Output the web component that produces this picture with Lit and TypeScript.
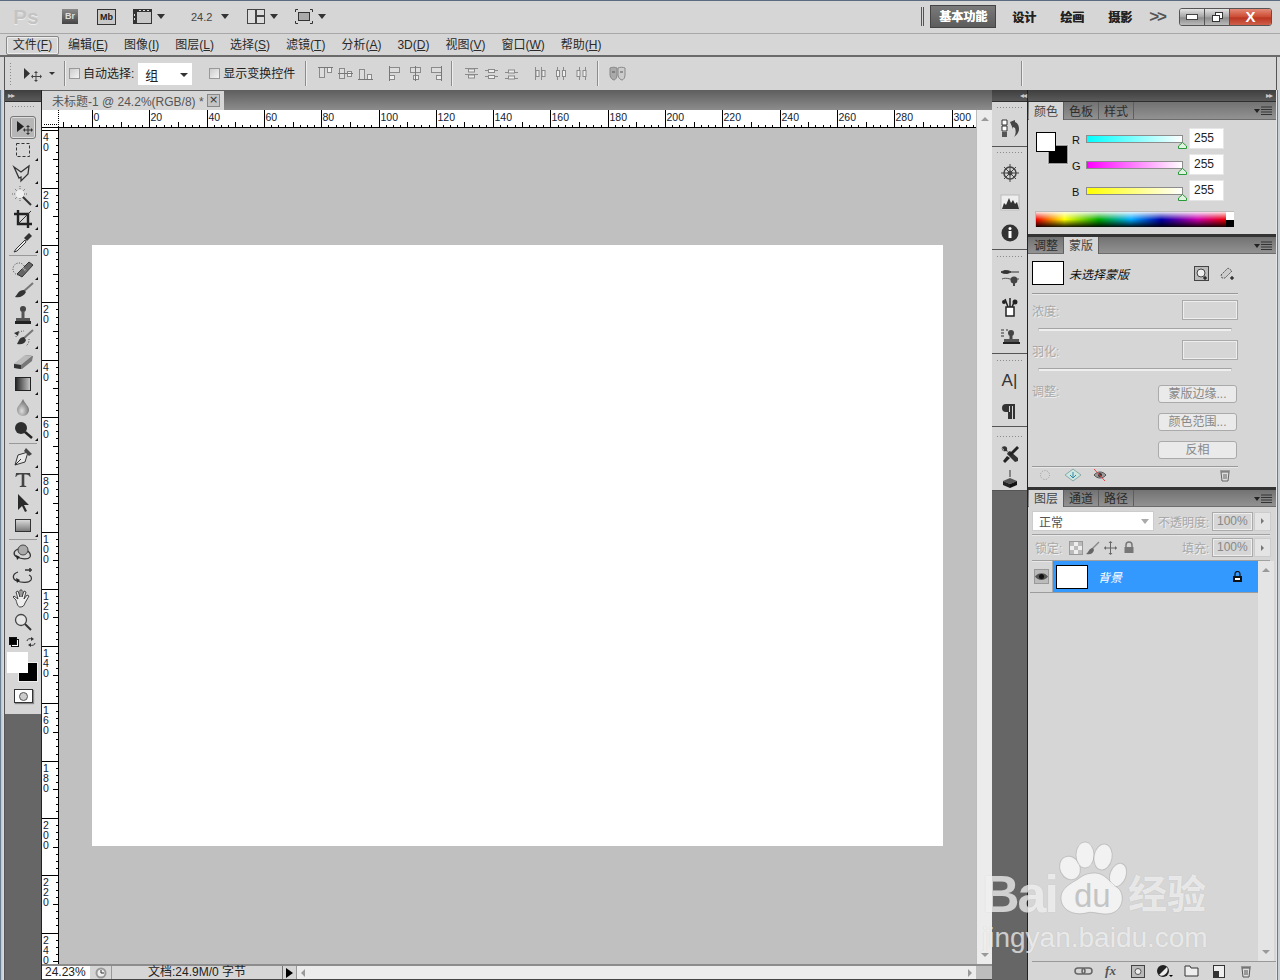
import { LitElement, css, html, svg, type TemplateResult } from "lit";
import { customElement } from "lit/decorators.js";

const UNIT = 57.3;
const ORIGIN_X = 50; // px from the left edge of the horizontal ruler (x = 42)
const ORIGIN_Y = 117; // px from the top of the vertical ruler (y = 128)

const ic = (content: unknown, w = 24, h = 23) =>
  html`<svg width=${w} height=${h} viewBox="0 0 ${w} ${h}">${content}</svg>`;

const tools: (
  | { sep: true }
  | { sep?: false; corner: boolean; active?: boolean; draw: unknown }
)[] = [
  {
    corner: false,
    active: true,
    draw: svg`<path d="M6 5v11l7-5.5z" fill="#222"/><path d="M17 10v8M13 14h8" stroke="#333" fill="none"/><path d="M17 9l-2 2h4zM17 19l-2-2h4zM12 14l2-2v4zM22 14l-2-2v4z" fill="#333"/>`,
  },
  {
    corner: true,
    draw: svg`<rect x="5.5" y="4.5" width="13" height="13" fill="none" stroke="#333" stroke-dasharray="3 2"/>`,
  },
  {
    corner: true,
    draw: svg`<path d="M3 5l7 5 8-6-1 8-7 7 0-4-2 1z" fill="none" stroke="#333" stroke-width="1.3"/>`,
  },
  {
    corner: true,
    draw: svg`<path d="M10 10l10 10" stroke="#333" stroke-width="2"/><circle cx="9" cy="9" r="4" fill="#eee"/><path d="M9 1v4M9 13v4M1 9h4M13 9h4M4 4l2 2M14 4l-2 2M4 14l2-2" stroke="#666" stroke-dasharray="1 1"/>`,
  },
  {
    corner: true,
    draw: svg`<path d="M7 2v14h14M3 6h14v14" fill="none" stroke="#222" stroke-width="2.4"/><path d="M7 16L20 3" stroke="#333"/>`,
  },
  {
    corner: true,
    draw: svg`<path d="M14 9l-9 9-2 3 3-1 9-9z" fill="#eee" stroke="#333"/><path d="M13 7l5-5 3 3-5 5z" fill="#333"/>`,
  },
  { sep: true },
  {
    corner: true,
    draw: svg`<circle cx="8" cy="11" r="6" fill="none" stroke="#444" stroke-dasharray="1 1.5"/><path d="M6 16L18 4l4 3-11 12z" fill="#666" stroke="#333"/><path d="M12 10l3 3" stroke="#bbb" stroke-width="2" stroke-dasharray="1 1"/>`,
  },
  {
    corner: true,
    draw: svg`<path d="M22 2L12 11" stroke="#777" stroke-width="2"/><path d="M13 9c-6 0-6 4-9 7 5 1 9-1 11-5z" fill="#333"/>`,
  },
  {
    corner: true,
    draw: svg`<circle cx="12" cy="5" r="3" fill="#444"/><rect x="10.5" y="7" width="3" height="7" fill="#555"/><rect x="5" y="14" width="14" height="3" fill="#555"/><rect x="4" y="17" width="16" height="3" fill="#222"/>`,
  },
  {
    corner: true,
    draw: svg`<path d="M22 3L12 12" stroke="#777" stroke-width="2"/><path d="M13 10c-5 0-5 4-7 7 4 1 8 0 9-4z" fill="#333"/><path d="M5 10a8 8 0 0 1 8-6M18 12a8 8 0 0 1-3 7" fill="none" stroke="#444" stroke-dasharray="1 1.5"/><path d="M3 6l5-2-1 5z" fill="#333"/>`,
  },
  {
    corner: true,
    draw: svg`<path d="M3 14L15 5l7 1-1 5-10 8-7-1z" fill="#777"/><path d="M3 14l7 1 11-9-7-1z" fill="#bbb"/><path d="M3 14l7 1v4l-7-1z" fill="#333"/>`,
  },
  {
    corner: true,
    draw: svg`<defs><linearGradient id="gr"><stop offset="0" stop-color="#222"/><stop offset="1" stop-color="#ccc"/></linearGradient></defs><rect x="4.5" y="4.5" width="15" height="13" fill="url(#gr)" stroke="#222"/>`,
  },
  {
    corner: true,
    draw: svg`<defs><radialGradient id="dp" cx=".4" cy=".7" r=".8"><stop offset="0" stop-color="#ddd"/><stop offset="1" stop-color="#555"/></radialGradient></defs><path d="M12 3c2 5 6 7 6 11a6 6 0 0 1-12 0c0-4 4-6 6-11z" fill="url(#dp)"/>`,
  },
  {
    corner: true,
    draw: svg`<circle cx="10" cy="9" r="6" fill="#2e2e2e"/><path d="M14 13l7 6" stroke="#222" stroke-width="2.5"/>`,
  },
  { sep: true },
  {
    corner: true,
    draw: svg`<path d="M17 6l-10 3-3 10 10-3 3-10z" fill="#e8e8e8" stroke="#333"/><path d="M15 2l6 6-3 2-5-5z" fill="#444"/><path d="M4 19l6-6" stroke="#333"/>`,
  },
  {
    corner: true,
    draw: svg`<path d="M5 4h14l.6 4H19c-.8-1.800-1.800-2.600-4-2.600h-1.700v11l2 .8v.8H8.700v-.8l2-.8v-11H9C6.800 5.400 5.800 6.200 5 8h-.6z" fill="#444"/>`,
  },
  {
    corner: true,
    draw: svg`<path d="M7 2v16l4-4 3 6 2-1-3-6h5z" fill="#2a2a2a"/>`,
  },
  {
    corner: true,
    draw: svg`<defs><linearGradient id="sh" x2="0" y2="1"><stop offset="0" stop-color="#ddd"/><stop offset="1" stop-color="#777"/></linearGradient></defs><rect x="4.5" y="4.5" width="15" height="12" fill="url(#sh)" stroke="#333"/>`,
  },
  { sep: true },
  {
    corner: false,
    draw: svg`<circle cx="12" cy="8" r="5" fill="#aaa" stroke="#444"/><path d="M7 7C2 9 2 13 6 15c4 2 11 3 13 0 1-2 0-4-2-6" fill="none" stroke="#333" stroke-width="1.3"/><path d="M9 15l-3 3-1-5z" fill="#222"/>`,
  },
  {
    corner: false,
    draw: svg`<path d="M7 7C1 9 1 14 6 16c5 2 12 2 14-1 1-2 0-4-2-5" fill="none" stroke="#333" stroke-width="1.3"/><path d="M9 15l-3 3-1-5z" fill="#222"/><path d="M14 5h7M19 3v4" stroke="#333" stroke-width="1.5"/>`,
  },
  {
    corner: false,
    draw: svg`<path d="M5 12L2 9l1-1 4 3-2-7 2-1 2 6V2h2v7l2-6 2 1-2 7 3-4 2 1-4 7c-1 3-2 4-5 4H9c-2 0-3-3-4-7z" fill="#eee" stroke="#333" stroke-width=".9"/>`,
  },
  {
    corner: false,
    draw: svg`<circle cx="10" cy="9" r="5.5" fill="#e6e6e6" stroke="#444" stroke-width="1.3"/><path d="M14 13l6 6" stroke="#333" stroke-width="2"/>`,
  },
];

const dockGroups: { h: number; pad: number; icons: unknown[] }[] = [
  {
    h: 45,
    pad: 4,
    icons: [
      svg`<path d="M2 2h5v5H2z M2 8h5v5H2z" fill="#fff" stroke="#333"/><path d="M2 14h5v5H2z" fill="#555"/><path d="M10 4l5-2v2c3 1 4 4 4 7s-2 6-5 8c2-3 2-6 1-9l-2-1v2z" fill="#444"/>`,
    ],
  },
  {
    h: 103,
    pad: 4,
    icons: [
      svg`<circle cx="10" cy="10" r="6" fill="none" stroke="#444" stroke-width="1.5"/><circle cx="10" cy="10" r="2.5" fill="#444"/><path d="M10 1v18M1 10h18M4 4l12 12M16 4L4 16" stroke="#444"/>`,
      svg`<rect x="1" y="2" width="18" height="15" fill="#eee" stroke="#bbb"/><path d="M2 16l2-6 2 2 3-7 2 5 2-3 2 4 2-2 2 7z" fill="#333"/>`,
      svg`<circle cx="10" cy="10" r="8.5" fill="#333"/><circle cx="10" cy="5.5" r="1.5" fill="#fff"/><rect x="8.5" y="8" width="3" height="7" fill="#fff"/>`,
    ],
  },
  {
    h: 104,
    pad: 5,
    icons: [
      svg`<path d="M1 5c4-2 7-2 10 0H19M1 5c3 2 6 2 10 0" stroke="#333" fill="#333"/><path d="M19 12h-9c-3-1-6-1-8 0" stroke="#555" fill="none"/><circle cx="14" cy="13" r="3.5" fill="#444"/><path d="M14 15v4" stroke="#444" stroke-width="2"/>`,
      svg`<rect x="6" y="10" width="8" height="9" fill="#fff" stroke="#222" stroke-width="1.5"/><path d="M8 10L5 2M10 10V1M12 10l3-7" stroke="#222" stroke-width="1.5"/><circle cx="4" cy="5" r="2" fill="#222"/><circle cx="15" cy="5" r="2.5" fill="#222"/>`,
      svg`<path d="M1 3h3M1 6h3M1 9h3M6 3h2" stroke="#333"/><circle cx="11" cy="6" r="3" fill="#444"/><rect x="9.5" y="6" width="3" height="6" fill="#444"/><rect x="4" y="12" width="15" height="3" fill="#555"/><rect x="3" y="15" width="17" height="2" fill="#222"/>`,
    ],
  },
  {
    h: 73,
    pad: 5,
    icons: [
      "A|",
      svg`<path d="M9 3H6a4 4 0 0 0 0 8h3zM10 3h2v15h-2zM13 3h2v15h-2zM9 3h6v2H9zM8 11h2v7H8z" fill="#333"/>`,
    ],
  },
  {
    h: 64,
    pad: 8,
    icons: [
      svg`<path d="M2 3c-1 3 1 5 4 4l2 1-1 2 8 8 3-1 0-3-8-7-2 1-1-2c1-3-2-5-5-3l2 3-1 1z" fill="#333"/><path d="M17 2L9 10l2 2 8-8zM7 12l-4 5 2 2 5-5z" fill="#222"/>`,
      svg`<path d="M10 2v7" stroke="#333"/><path d="M3 13l7-3 7 3-7 3z" fill="#555"/><path d="M3 13l7 3v4l-7-3z" fill="#222"/><path d="M17 13l-7 3v4l7-3z" fill="#111"/>`,
    ],
  },
];

@customElement("app-root")
export class AppRoot extends LitElement {
  static styles = css`
    :host {
      display: block;
      position: relative;
      width: 1280px;
      height: 980px;
      overflow: hidden;
      background: #d6d6d6;
      font: 12px "Liberation Sans", "Noto Sans CJK SC", sans-serif;
      color: #222;
    }
    svg {
      display: block;
    }

    /* top application bar */
    .app-bar {
      display: flex;
      align-items: center;
      height: 34px;
      border-top: 1px solid #5b6b80;
      border-bottom: 1px solid #a8a8a8;
      box-sizing: border-box;
      padding-bottom: 1px;
      position: relative;
    }
    .ps {
      width: 62px;
      padding-left: 13px;
      box-sizing: border-box;
      font: bold 21px "Liberation Sans", sans-serif;
      color: #c4c4c4;
      text-shadow: 0 1px 0 #eee;
    }
    .br {
      width: 16px;
      height: 15px;
      background: linear-gradient(#8a8a8a, #444);
      color: #ddd;
      font: bold 9px/15px "Liberation Sans", sans-serif;
      text-align: center;
      margin-right: 19px;
    }
    .mb {
      width: 17px;
      height: 14px;
      border: 1px solid #333;
      background: #c8c8c8;
      font: bold 9px/14px "Liberation Sans", sans-serif;
      text-align: center;
      margin-right: 17px;
    }
    .tri {
      width: 0;
      height: 0;
      border-left: 4px solid transparent;
      border-right: 4px solid transparent;
      border-top: 5px solid #333;
    }
    .film {
      margin-right: 5px;
    }
    .zoom-val {
      margin-left: 26px;
      width: 30px;
      font-size: 11px;
      color: #444;
    }
    .zoom-val + .tri {
      margin-right: 18px;
    }
    .layout + .tri {
      margin: 0 17px 0 5px;
    }
    .screen + .tri {
      margin-left: 5px;
    }
    .spacer {
      flex: 1;
    }
    .grip2 {
      width: 1px;
      height: 19px;
      border-left: 1px solid #555;
      border-right: 1px solid #555;
      margin-right: 6px;
    }
    .ws {
      font-weight: bold;
      font-size: 12px;
      width: 48px;
      text-align: center;
      text-shadow: 0.3px 0 0 #222;
    }
    .ws.on {
      width: 66px;
      height: 23px;
      line-height: 23px;
      background: linear-gradient(#7a7a7a, #5c5c5c);
      border: 1px solid #444;
      box-sizing: border-box;
      color: #fff;
      text-shadow: 0.3px 0 0 #fff;
      margin-right: 4px;
    }
    .more {
      margin: 0 14px 0 5px;
      font: bold 17px/16px "Liberation Sans", sans-serif;
      color: #555;
      letter-spacing: -2px;
    }
    .win {
      display: flex;
      height: 18px;
      width: 93px;
      margin-right: 8px;
      border: 1px solid #555;
      border-radius: 3px;
      box-sizing: border-box;
      overflow: hidden;
    }
    .win div {
      display: flex;
      align-items: center;
      justify-content: center;
      width: 25px;
      background: linear-gradient(#e4e4e4, #a4a4a4 50%, #8c8c8c 55%, #bbb);
      border-right: 1px solid #555;
      box-sizing: border-box;
    }
    .win .close {
      flex: 1;
      border: none;
      background: linear-gradient(#e48a78, #cc4a33 50%, #b93520 55%, #d0604c);
      color: #fff;
      font: bold 15px/16px "Liberation Sans", sans-serif;
    }

    /* menu */
    .menu {
      display: flex;
      align-items: center;
      gap: 16px;
      height: 23px;
      padding: 1px 0 0 6px;
      box-sizing: border-box;
      font-size: 12px;
      border-bottom: 2px solid #6a6a6a;
      color: #2a2a2a;
    }
    .menu span {
      line-height: 19px;
    }
    .menu .on {
      width: 53px;
      height: 19px;
      box-sizing: border-box;
      border: 1px solid #888;
      border-radius: 2px;
      box-shadow: inset 0 0 0 1px #eee;
      text-align: center;
      line-height: 17px;
      margin-right: -7px;
    }

    /* options bar */
    .options {
      display: flex;
      align-items: center;
      height: 33px;
      margin: 0 3px 0 4px;
      box-sizing: border-box;
      border-left: 1px solid #555;
      border-right: 1px solid #555;
      padding-left: 4px;
      color: #222;
    }
    .options > span {
      padding-bottom: 3px;
    }
    .grip-v {
      width: 3px;
      height: 24px;
      background-image: radial-gradient(#8a8a8a 0.8px, transparent 1px);
      background-size: 3px 3px;
      margin-right: 11px;
    }
    .options .tri {
      border-left-width: 3px;
      border-right-width: 3px;
      border-top-width: 3px;
      margin: 0 9px 0 6px;
    }
    .opt-sep {
      width: 1px;
      height: 25px;
      background: #8c8c8c;
      box-shadow: 1px 0 0 #eee;
      margin-right: 4px;
    }
    .opt-sep.a {
      margin: 0 12px 0 10px;
    }
    .opt-sep.b {
      margin: 0 12px 0 3px;
    }
    .opt-sep.c {
      margin: 0 11px 0 4px;
    }
    .opt-sep.d {
      margin: 0 254px 0 0;
    }
    .check {
      width: 9px;
      height: 9px;
      border: 1px solid #999;
      background: linear-gradient(135deg, #ccc, #f4f4f4);
      margin-right: 3px;
    }
    .o-select {
      display: flex;
      align-items: center;
      justify-content: space-between;
      width: 54px;
      height: 22px;
      box-sizing: border-box;
      background: #fff;
      padding: 2px 4px 0 7px;
      margin: 0 17px 0 4px;
      font-size: 13px;
    }
    .options .o-select .tri {
      border-left-width: 4px;
      border-right-width: 4px;
      border-top-width: 4px;
      margin: 0;
    }
    .al {
      margin-right: 5px;
    }
    .gap-a {
      width: 10px;
    }
    .gap-b {
      width: 9px;
    }

    /* main area */
    .main {
      display: flex;
      height: 890px;
      background: #666;
    }
    .frame-l {
      width: 5px;
      flex: none;
      background: linear-gradient(90deg, #6d7f92 0, #6d7f92 1px, #b7c4cf 1px, #dde2e6 4px, #555 4px);
    }
    .frame-r {
      width: 4px;
      flex: none;
      background: linear-gradient(90deg, #e4e4e4 0, #e4e4e4 1px, #777 1px, #777 2px, #c9d0d6 2px);
    }
    .head {
      height: 12px;
      background: linear-gradient(#3e3e3e, #5a5a5a);
      border-bottom: 1px solid #2e2e2e;
      box-sizing: border-box;
      display: flex;
      align-items: center;
      color: #c8c8c8;
      font: 8px/11px "DejaVu Sans", sans-serif;
      letter-spacing: -1px;
    }

    /* tool box */
    .toolbox {
      width: 36px;
      flex: none;
      border-right: 1px solid #222;
    }
    .toolbox .head {
      padding-left: 3px;
    }
    .tools {
      background: #d6d6d6;
      height: 612px;
      padding-top: 3px;
      box-sizing: border-box;
    }
    .grip-h {
      height: 3px;
      margin: 0 4px;
      background-image: radial-gradient(#8a8a8a 0.8px, transparent 1px);
      background-size: 3px 3px;
    }
    .tools > .grip-h {
      margin: 0 6px 8px;
    }
    .tool {
      position: relative;
      height: 23px;
      display: flex;
      justify-content: center;
      align-items: center;
    }
    .tool.active {
      margin: 0 5px;
      background: #b6b6b6;
      border: 1px solid #777;
      border-radius: 3px;
      box-sizing: border-box;
      box-shadow: inset 0 0 0 1px #ddd;
    }
    .tool.corner::after {
      content: "";
      position: absolute;
      right: 3px;
      bottom: 1px;
      border-left: 3px solid transparent;
      border-bottom: 3px solid #111;
    }
    .tool-sep {
      height: 1px;
      margin: 1px 4px 2px;
      background: #999;
    }
    .mini {
      display: flex;
      justify-content: space-between;
      align-items: center;
      height: 16px;
      margin: 0 5px 0 4px;
    }
    .mini-sw {
      position: relative;
      width: 10px;
      height: 10px;
    }
    .mini-sw i {
      position: absolute;
      width: 6px;
      height: 6px;
      border: 1px solid #111;
    }
    .mini-sw i:first-child {
      right: 0;
      bottom: 0;
      background: #fff;
    }
    .mini-sw i:last-child {
      left: 0;
      top: 0;
      background: #000;
    }
    .big-sw {
      position: relative;
      height: 33px;
      margin-top: 1px;
    }
    .big-sw i {
      position: absolute;
      display: block;
      box-sizing: border-box;
    }
    .big-sw .bg {
      left: 13px;
      top: 11px;
      width: 20px;
      height: 20px;
      background: #000;
      border: 1px solid #eee;
    }
    .big-sw .fg {
      left: 2px;
      top: 1px;
      width: 21px;
      height: 21px;
      background: #fff;
    }
    .qmask {
      width: 17px;
      height: 12px;
      margin: 5px auto 0;
      border: 1px solid #333;
      background: #fff;
      box-shadow: 1px 1px 1px #888;
      display: flex;
      align-items: center;
      justify-content: center;
    }
    .qmask i {
      width: 7px;
      height: 7px;
      border-radius: 50%;
      border: 1px solid #555;
      background: #ccc;
    }

    /* document */
    .doc {
      width: 950px;
      flex: none;
      display: flex;
      flex-direction: column;
      background: #c0c0c0;
    }
    .doc-tabs {
      height: 20px;
      flex: none;
      background: linear-gradient(#5e5e5e, #8c8c8c);
      display: flex;
    }
    .doc-tab {
      display: flex;
      align-items: center;
      justify-content: space-between;
      width: 182px;
      height: 19px;
      margin-top: 1px;
      box-sizing: border-box;
      padding: 0 4px 0 10px;
      background: #d6d6d6;
      color: #555;
      font-size: 12px;
    }
    .doc-x {
      width: 11px;
      height: 11px;
      border: 1px solid #888;
      background: #c4c4c4;
      color: #333;
      font: 11px/10px "DejaVu Sans", sans-serif;
      text-align: center;
    }
    .doc-mid {
      flex: 1;
      display: flex;
      min-height: 0;
    }
    .doc-left {
      flex: 1;
      display: flex;
      flex-direction: column;
      min-width: 0;
    }
    .vscroll {
      width: 16px;
      flex: none;
      background: #ececec;
      border-left: 1px solid #bdbdbd;
      box-sizing: border-box;
      display: flex;
      flex-direction: column;
      justify-content: space-between;
      align-items: center;
      padding: 7px 0;
    }
    .up,
    .down {
      width: 0;
      height: 0;
      border-left: 4px solid transparent;
      border-right: 4px solid transparent;
    }
    .up {
      border-bottom: 4px solid #999;
    }
    .down {
      border-top: 4px solid #999;
    }
    .ruler-h {
      height: 18px;
      flex: none;
      background: #fff;
    }
    .work {
      flex: 1;
      display: flex;
      min-height: 0;
    }
    .ruler-v {
      width: 17px;
      flex: none;
      background: #fff;
      overflow: hidden;
    }
    .ruler-text {
      font: 10.5px "Liberation Sans", sans-serif;
      fill: #123;
    }
    .canvas {
      flex: 1;
      display: flex;
      align-items: center;
      justify-content: center;
      background: #c0c0c0;
    }
    .sheet {
      width: 851px;
      height: 601px;
      margin-bottom: 1px;
      background: #fff;
    }
    .status {
      height: 16px;
      flex: none;
      display: flex;
      border-top: 2px solid #8c8c8c;
      border-bottom: 1px solid #444;
      box-sizing: border-box;
      background: #d6d6d6;
      align-items: stretch;
    }
    .st-zoom {
      width: 48px;
      background: #fff;
      padding-left: 3px;
      box-sizing: border-box;
      font-size: 12px;
      line-height: 13px;
      flex: none;
    }
    .st-time {
      width: 22px;
      flex: none;
      display: flex;
      align-items: center;
      justify-content: center;
      border-right: 1px solid #999;
      box-sizing: border-box;
    }
    .st-info {
      width: 171px;
      flex: none;
      text-align: center;
      font-size: 12px;
      line-height: 13px;
      border-right: 1px solid #777;
      box-sizing: border-box;
    }
    .st-arrow {
      width: 13px;
      flex: none;
      display: flex;
      align-items: center;
      justify-content: center;
    }
    .st-arrow i {
      border-top: 5px solid transparent;
      border-bottom: 5px solid transparent;
      border-left: 7px solid #000;
    }
    .hscroll {
      flex: 1;
      background: #ececec;
      display: flex;
      justify-content: space-between;
      align-items: center;
      padding: 0 4px;
      border-left: 1px solid #999;
    }
    .left,
    .right {
      width: 0;
      height: 0;
      border-top: 4px solid transparent;
      border-bottom: 4px solid transparent;
    }
    .left {
      border-right: 4px solid #999;
    }
    .right {
      border-left: 4px solid #999;
    }
    .corner-box {
      width: 16px;
      flex: none;
      background: #bdbdbd;
    }

    /* dock strip */
    .dock {
      width: 36px;
      flex: none;
      border-right: 1px solid #222;
      box-sizing: border-box;
    }
    .dock .head {
      justify-content: flex-end;
      padding-right: 1px;
    }
    .dock-group {
      background: #d6d6d6;
      border-bottom: 1px solid #555;
      box-sizing: border-box;
      display: flex;
      flex-direction: column;
      align-items: center;
    }
    .dock-group .grip-h {
      align-self: stretch;
      margin: 0 4px 4px;
    }
    .dock-icon {
      height: 30px;
      display: flex;
      align-items: center;
      justify-content: center;
      color: #333;
      font: 17px "Liberation Sans", sans-serif;
    }

    /* panels */
    .panels {
      width: 248px;
      flex: none;
      display: flex;
      flex-direction: column;
      background: #d6d6d6;
    }
    .panels .head {
      justify-content: flex-end;
      padding-right: 4px;
    }
    .tabs {
      display: flex;
      height: 18px;
      flex: none;
      padding-left: 1px;
      background: linear-gradient(#727272, #929292);
      border-bottom: 1px solid #6c6c6c;
      box-sizing: border-box;
      position: relative;
    }
    .tab {
      width: 35px;
      text-align: center;
      font-size: 12px;
      line-height: 20px;
      color: #2c2c2c;
      border-right: 1px solid #5e5e5e;
      box-sizing: border-box;
    }
    .tab.on {
      background: #d6d6d6;
      height: 18px;
      color: #444;
    }
    .tabs .pmenu {
      position: absolute;
      right: 4px;
      top: 4px;
    }
    .divider {
      height: 3px;
      flex: none;
      background: #333;
    }
    .tabs.short {
      height: 17px;
    }
    .tabs.short .tab {
      line-height: 19px;
    }
    .tabs.short .tab.on {
      height: 17px;
    }

    .color-body {
      height: 114px;
      flex: none;
      padding: 8px 0 0 8px;
      box-sizing: border-box;
    }
    .color-top {
      display: flex;
      height: 75px;
    }
    .swatches {
      position: relative;
      width: 36px;
      flex: none;
    }
    .swatches i {
      position: absolute;
      display: block;
      box-sizing: border-box;
    }
    .swatches .b {
      left: 12px;
      top: 17px;
      width: 20px;
      height: 19px;
      background: #000;
      border: 1px solid #999;
      box-shadow: 0 0 0 1px #ddd;
    }
    .swatches .f {
      left: 0;
      top: 4px;
      width: 20px;
      height: 20px;
      background: #fff;
      border: 1px solid #000;
    }
    .chan {
      display: flex;
      align-items: center;
      height: 26px;
    }
    .chan label {
      width: 14px;
      font-size: 11px;
      flex: none;
      color: #111;
      margin-bottom: 2px;
    }
    .bar {
      position: relative;
      width: 95px;
      height: 6px;
      margin-bottom: 5px;
      border: 1px solid #8d8d8d;
      flex: none;
    }
    .bar.r {
      background: linear-gradient(90deg, #0ff, #fff);
    }
    .bar.g {
      background: linear-gradient(90deg, #f0f, #fff);
    }
    .bar.b {
      background: linear-gradient(90deg, #ff0, #fff);
    }
    .thumb {
      position: absolute;
      right: -5px;
      top: 6px;
      width: 9px;
      height: 7px;
    }
    .val {
      width: 35px;
      height: 21px;
      margin: 0 0 5px 6px;
      background: #fff;
      box-sizing: border-box;
      padding-left: 4px;
      font-size: 12px;
      line-height: 19px;
      border: 1px solid #e6e6e6;
      flex: none;
    }
    .spectrum {
      width: 199px;
      height: 16px;
      margin: 8px 0 0 -1px;
      display: flex;
      border: 1px solid #bbb;
      border-width: 1px 0 0 1px;
      box-sizing: border-box;
    }
    .spectrum .hue {
      flex: 1;
      background: linear-gradient(#ffffffe0, #ffffff00 50%, #00000000 50%, #000000e6),
        linear-gradient(90deg, #e00, #ff0 15%, #0a0 33%, #0af 50%, #00a 66%, #c0a 85%, #e00);
    }
    .spectrum .bw {
      width: 8px;
      background: linear-gradient(#fff 50%, #000 50%);
    }

    /* masks */
    .mask-body {
      height: 233px;
      flex: none;
      padding: 7px 0 0 4px;
      box-sizing: border-box;
      color: #aaa;
    }
    .m-top {
      display: flex;
      align-items: center;
      height: 24px;
      color: #111;
    }
    .m-thumb {
      width: 32px;
      height: 24px;
      background: #fff;
      border: 1px solid #000;
      box-sizing: border-box;
      margin-right: 5px;
    }
    .m-name {
      font-style: italic;
      font-size: 12px;
      width: 125px;
    }
    .m-pick {
      margin-right: 11px;
    }
    .hr {
      height: 1px;
      width: 206px;
      margin-top: 8px;
      background: #999;
      box-shadow: 0 1px 0 #e8e8e8;
    }
    .adjust + .hr {
      margin-top: 7px;
    }
    .field {
      display: flex;
      justify-content: space-between;
      align-items: center;
      width: 206px;
      height: 20px;
      margin-top: 9px;
      color: #a8a8a8;
      text-shadow: 1px 1px 0 #f0f0f0;
    }
    .hr + .field {
      margin-top: 6px;
    }
    .field i {
      width: 56px;
      height: 20px;
      box-sizing: border-box;
      border: 1px solid #aaa;
      box-shadow: inset 0 0 0 1px #eee;
    }
    .m-slider {
      width: 194px;
      height: 3px;
      margin: 8px 0 0 6px;
      border-top: 1px solid #a4a4a4;
      border-left: 1px solid #ccc;
      border-right: 1px solid #ccc;
      background: #efefef;
      box-sizing: border-box;
    }
    .adjust {
      display: flex;
      justify-content: space-between;
      width: 205px;
      margin-top: 14px;
      color: #a8a8a8;
    }
    .adjust > span {
      text-shadow: 1px 1px 0 #f0f0f0;
      line-height: 15px;
    }
    .m-btns {
      display: flex;
      flex-direction: column;
      gap: 10px;
    }
    .m-btn {
      width: 79px;
      height: 18px;
      box-sizing: border-box;
      border: 1px solid #aaa;
      border-radius: 3px;
      background: #eaeaea;
      color: #888;
      text-align: center;
      font-size: 12px;
      line-height: 16px;
    }
    .m-foot {
      display: flex;
      align-items: center;
      height: 16px;
      width: 206px;
    }
    .f-load {
      margin-left: 6px;
    }
    .f-apply {
      margin-left: 12px;
    }
    .f-eye {
      margin-left: 10px;
    }
    .f-trash {
      margin-right: 7px;
    }

    /* layers */
    .layer-body {
      flex: 1;
      display: flex;
      flex-direction: column;
      padding-top: 4px;
      min-height: 0;
    }
    .l-row {
      display: flex;
      align-items: center;
      margin-left: 4px;
      height: 20px;
      color: #a8a8a8;
    }
    .l-select {
      display: flex;
      justify-content: space-between;
      align-items: center;
      width: 122px;
      height: 20px;
      box-sizing: border-box;
      background: #fff;
      border: 1px solid #ccc;
      padding: 0 4px 0 6px;
      color: #555;
      margin-right: 4px;
    }
    .l-select .tri {
      border-top-color: #aaa;
    }
    .shadowed {
      text-shadow: 1px 1px 0 #f0f0f0;
    }
    .w-opacity {
      width: 54px;
    }
    .w-lock {
      width: 34px;
    }
    .w-fill {
      width: 30px;
    }
    .lk-a {
      margin-right: 2px;
    }
    .lk-b {
      margin-right: 3px;
    }
    .lk-c {
      margin-right: 5px;
    }
    .lk-d {
      margin-right: 47px;
    }
    .pct {
      width: 41px;
      height: 19px;
      box-sizing: border-box;
      border: 1px solid #aaa;
      box-shadow: inset 0 0 0 1px #eee;
      color: #888;
      padding-left: 4px;
      line-height: 17px;
    }
    .pct-btn {
      display: flex;
      align-items: center;
      justify-content: center;
      width: 17px;
      height: 19px;
      box-sizing: border-box;
      background: #e4e4e4;
      border: 1px solid #ccc;
      margin-left: 1px;
    }
    .pct-btn i {
      border-top: 3px solid transparent;
      border-bottom: 3px solid transparent;
      border-left: 3px solid #777;
    }
    .l-hr {
      height: 1px;
      background: #a0a0a0;
      margin: 3px 0 0 4px;
      width: 238px;
      box-shadow: 0 1px 0 #e8e8e8;
    }
    .l-row.lock {
      height: 19px;
      margin-top: 3px;
      padding-left: 3px;
    }
    .l-list {
      flex: 1;
      display: flex;
      min-height: 0;
    }
    .l-rows {
      flex: 1;
      padding-left: 2px;
    }
    .l-layer {
      display: flex;
      height: 32px;
      border-bottom: 1px solid #9c9c9c;
      box-sizing: border-box;
    }
    .eye {
      width: 23px;
      display: flex;
      align-items: center;
      justify-content: center;
      border-right: 1px solid #aaa;
      box-sizing: border-box;
    }
    .eye-in {
      width: 15px;
      height: 15px;
      background: #bbb;
      border: 1px solid #999;
      box-sizing: border-box;
      display: flex;
      align-items: center;
      justify-content: center;
    }
    .l-main {
      flex: 1;
      display: flex;
      align-items: center;
      background: #3399ff;
      color: #fff;
      padding-left: 3px;
    }
    .l-thumb {
      width: 32px;
      height: 24px;
      background: #fff;
      border: 1px solid #000;
      box-sizing: border-box;
    }
    .l-name {
      margin-left: 10px;
      font-style: italic;
      font-size: 12px;
      flex: 1;
    }
    .l-lock {
      margin-right: 15px;
    }
    .l-scroll {
      width: 16px;
      margin-right: 2px;
      flex: none;
      background: #e4e4e4;
      display: flex;
      flex-direction: column;
      justify-content: space-between;
      align-items: center;
      padding: 7px 0;
      box-sizing: border-box;
    }
    .l-foot {
      height: 19px;
      flex: none;
      border-top: 1px solid #999;
      margin-left: 4px;
      display: flex;
      justify-content: flex-end;
      align-items: center;
      padding-right: 17px;
      box-sizing: border-box;
    }
    .cell {
      width: 27px;
      display: flex;
      justify-content: center;
    }
    .fx {
      font: italic bold 13px "Liberation Serif", serif;
      color: #555;
    }

    /* watermark sits over everything */
    .mark {
      position: absolute;
      left: 980px;
      top: 835px;
      width: 240px;
      height: 125px;
      color: rgba(255, 255, 255, 0.68);
      pointer-events: none;
    }
    .mark span {
      position: absolute;
      line-height: 1;
      white-space: nowrap;
      font-family: "Liberation Sans", "Noto Sans CJK SC", sans-serif;
      text-shadow: 0 0 1px rgba(130, 130, 130, 0.3);
    }
    .mark .bai {
      left: 2px;
      top: 33px;
      font-size: 52px;
      font-weight: bold;
      letter-spacing: -2px;
    }
    .mark .jy {
      left: 148px;
      top: 40px;
      font-size: 39px;
      font-weight: bold;
    }
    .mark .url {
      left: 2px;
      top: 89px;
      font-size: 28px;
    }
    .mark svg {
      position: absolute;
      left: 0;
      top: 0;
    }
    .mark .du {
      left: 94px;
      top: 44px;
      font-size: 33px;
      color: #c4c4c4;
      text-shadow: none;
    }
  `;

  private chevrons(dir: "l" | "r") {
    return html`<span>${dir === "r" ? "▸▸" : "◂◂"}</span>`;
  }

  private panelMenu() {
    return html`<svg class="pmenu" width="18" height="11" viewBox="0 0 18 11">
      <path d="M0 3h6L3 7z" fill="#222" />
      <path d="M7 1h11M7 3.5h11M7 6h11M7 8.5h11" stroke="#333" />
    </svg>`;
  }

  private tabs(labels: string[], on: number, short = false) {
    return html`<div class="tabs ${short ? "short" : ""}">
      ${labels.map((t, i) => html`<div class="tab ${i === on ? "on" : ""}">${t}</div>`)}
      ${this.panelMenu()}
    </div>`;
  }

  private rulerH() {
    const w = 934;
    const marks: unknown[] = [];
    const step = UNIT / 8;
    for (let i = -6; i * step + ORIGIN_X < w; i++) {
      const x = Math.round(ORIGIN_X + i * step) + 0.5;
      if (x < 17) continue;
      const h = i % 8 === 0 ? 18 : i % 4 === 0 ? 6 : 3;
      marks.push(svg`<path d="M${x} 18v-${h}" stroke="#000" />`);
      if (i % 8 === 0 && i >= 0) {
        marks.push(svg`<text class="ruler-text" x=${x + 1} y="11">${(i / 8) * 20}</text>`);
      }
    }
    return html`<svg width=${w} height="18">
      ${marks}
      <path d="M2 14.5h15" stroke="#000" stroke-dasharray="1 1" />
      <path d="M16.5 0v18" stroke="#000" stroke-dasharray="1 1" />
      <path d="M0 17.5h${w}" stroke="#000" />
    </svg>`;
  }

  private rulerV() {
    const h = 836;
    const marks: unknown[] = [];
    const step = UNIT / 8;
    for (let i = -16; i * step + ORIGIN_Y < h; i++) {
      const y = Math.round(ORIGIN_Y + i * step) + 0.5;
      if (y < 0) continue;
      const len = i % 8 === 0 ? 17 : i % 4 === 0 ? 6 : 3;
      marks.push(svg`<path d="M17 ${y}h-${len}" stroke="#000" />`);
      if (i % 8 === 0) {
        const digits = String(Math.abs((i / 8) * 20)).split("");
        digits.forEach((d, n) => {
          marks.push(svg`<text class="ruler-text" x="1" y=${y + 10 + n * 10}>${d}</text>`);
        });
      }
    }
    return html`<svg width="17" height=${h}>
      ${marks}
      <path d="M16.5 0v${h}" stroke="#000" />
    </svg>`;
  }

  // align (two boxes hanging off one line) and distribute (two lines) glyphs;
  // the second form of each is the same drawing with x and y swapped
  private alignIcons(distribute: boolean, swap: boolean) {
    const c = "#8a8a8a";
    return [0, 1, 2].map((i) => {
      let body: unknown;
      if (distribute) {
        const y1 = [2.5, 4.5, 6.5][i];
        body = svg`<path d="M1 ${y1}h13M1 ${y1 + 6}h13" stroke=${c} />
          <rect x="4.5" y=${y1 - i * 1.5 + 0.5} width="6" height="3" fill="#eee" stroke=${c} />
          <rect x="4.5" y=${y1 + 6 - i * 1.5 + 0.5} width="6" height="3" fill="#eee" stroke=${c} />`;
      } else {
        const line = [1.5, 7.5, 13.5][i];
        const tall = [1.5, 2.5, 3.5][i];
        const short = [1.5, 5.5, 8.5][i];
        body = svg`<rect x="1.5" y=${tall} width="5" height="10" fill="#ddd" stroke=${c} />
          <rect x="9.5" y=${short} width="4" height="5" fill="#eee" stroke=${c} />
          <path d="M0 ${line}h15" stroke="#777" />`;
      }
      return html`<svg class="al" width="15" height="15" viewBox="0 0 15 15">
        ${swap ? svg`<g transform="matrix(0 1 1 0 0 0)">${body}</g>` : body}
      </svg>`;
    });
  }

  private moveIcon() {
    return ic(
      svg`<path d="M1 3v11l6-5.5z" fill="#333"/><path d="M13 7v9M9 11.5h9" stroke="#444" fill="none"/><path d="M13 6l-2 2h4zM13 17l-2-2h4zM8 11.5l2-2v4zM19 11.5l-2-2v4z" fill="#444"/>`,
      20,
      18,
    );
  }

  render(): TemplateResult {
    return html`
      <div class="app-bar">
        <div class="ps">Ps</div>
        <div class="br">Br</div>
        <div class="mb">Mb</div>
        <svg class="film" width="19" height="15" viewBox="0 0 19 15">
          <rect x=".5" y=".5" width="18" height="14" fill="#c8c8c8" stroke="#333" />
          <path d="M0 0h19v3H0zM0 0h4v15H0z" fill="#333" />
          <path d="M6 1h2v1H6zM10 1h2v1h-2zM14 1h2v1h-2zM1 5h1v2H1zM1 9h1v2H1z" fill="#ddd" />
        </svg>
        <div class="tri"></div>
        <div class="zoom-val">24.2</div>
        <div class="tri"></div>
        <svg class="layout" width="18" height="15" viewBox="0 0 18 15">
          <rect width="18" height="15" fill="#444" />
          <path d="M1 1h7v13H1zM10 1h7v5h-7zM10 8h7v6h-7z" fill="#ddd" />
        </svg>
        <div class="tri"></div>
        <svg class="screen" width="18" height="15" viewBox="0 0 18 15">
          <path d="M.5 3V.5H3M15 .5h2.5V3M.5 12v2.5H3M15 14.5h2.5V12" fill="none" stroke="#333" />
          <rect x="3.5" y="3.5" width="11" height="8" fill="#aaa" stroke="#333" />
        </svg>
        <div class="tri"></div>
        <div class="spacer"></div>
        <div class="grip2"></div>
        <div class="ws on">基本功能</div>
        <div class="ws">设计</div>
        <div class="ws">绘画</div>
        <div class="ws">摄影</div>
        <div class="more">&gt;&gt;</div>
        <div class="win">
          <div>
            <svg width="12" height="6"><rect x=".5" y=".5" width="11" height="5" fill="#fff" stroke="#444" /></svg>
          </div>
          <div>
            <svg width="12" height="12" viewBox="0 0 12 12">
              <rect x="4.5" y="1.5" width="7" height="6" fill="#fff" stroke="#333" />
              <rect x="1.5" y="4.5" width="7" height="6" fill="#fff" stroke="#333" />
            </svg>
          </div>
          <div class="close">X</div>
        </div>
      </div>

      <div class="menu">
        <span class="on">文件(<u>F</u>)</span>
        <span>编辑(<u>E</u>)</span>
        <span>图像(<u>I</u>)</span>
        <span>图层(<u>L</u>)</span>
        <span>选择(<u>S</u>)</span>
        <span>滤镜(<u>T</u>)</span>
        <span>分析(<u>A</u>)</span>
        <span>3D(<u>D</u>)</span>
        <span>视图(<u>V</u>)</span>
        <span>窗口(<u>W</u>)</span>
        <span>帮助(<u>H</u>)</span>
      </div>

      <div class="options">
        <div class="grip-v"></div>
        ${this.moveIcon()}
        <div class="tri"></div>
        <div class="opt-sep"></div>
        <div class="check"></div>
        <span>自动选择:</span>
        <div class="o-select">组<div class="tri"></div></div>
        <div class="check"></div>
        <span>显示变换控件</span>
        <div class="opt-sep a"></div>
        ${this.alignIcons(false, false)}
        <div class="gap-a"></div>
        ${this.alignIcons(false, true)}
        <div class="opt-sep b"></div>
        ${this.alignIcons(true, false)}
        <div class="gap-b"></div>
        ${this.alignIcons(true, true)}
        <div class="opt-sep c"></div>
        <svg width="17" height="15" viewBox="0 0 17 15">
          <path d="M1 2c2-1 5-1 7 0v7c0 3-2 5-3 5s-4-2-4-5z" fill="#aaa" stroke="#888" />
          <path d="M9 2c2-1 5-1 7 0v7c0 3-2 5-3 5s-4-2-4-5z" fill="#ccc" stroke="#888" />
          <path d="M3 6h3M11 6h3" stroke="#555" />
        </svg>
        <div class="spacer"></div>
        <div class="opt-sep d"></div>
      </div>

      <div class="main">
        <div class="frame-l"></div>

        <div class="toolbox">
          <div class="head">${this.chevrons("r")}</div>
          <div class="tools">
            <div class="grip-h"></div>
            ${tools.map((t) =>
              t.sep
                ? html`<div class="tool-sep"></div>`
                : html`<div class="tool ${t.corner ? "corner" : ""} ${t.active ? "active" : ""}">
                    ${ic(t.draw)}
                  </div>`,
            )}
            <div class="mini">
              <div class="mini-sw"><i></i><i></i></div>
              <svg width="10" height="10" viewBox="0 0 10 10">
                <path d="M1 4c0-2 3-3 5-2M9 6c0 2-3 3-5 2" fill="none" stroke="#333" />
                <path d="M5 0l3 2-3 2zM5 6L2 8l3 2z" fill="#333" />
              </svg>
            </div>
            <div class="big-sw">
              <i class="bg"></i>
              <i class="fg"></i>
            </div>
            <div class="qmask"><i></i></div>
          </div>
        </div>

        <div class="doc">
          <div class="doc-tabs">
            <div class="doc-tab">
              <span>未标题-1 @ 24.2%(RGB/8) *</span>
              <div class="doc-x">×</div>
            </div>
          </div>
          <div class="doc-mid">
            <div class="doc-left">
              <div class="ruler-h">${this.rulerH()}</div>
              <div class="work">
                <div class="ruler-v">${this.rulerV()}</div>
                <div class="canvas"><div class="sheet"></div></div>
              </div>
            </div>
            <div class="vscroll"><i class="up"></i><i class="down"></i></div>
          </div>
          <div class="status">
            <div class="st-zoom">24.23%</div>
            <div class="st-time">
              <svg width="12" height="12" viewBox="0 0 12 12">
                <circle cx="6" cy="6" r="5.5" fill="#999" />
                <circle cx="6" cy="6" r="3.5" fill="#eee" />
                <path d="M6 3v3h3" fill="none" stroke="#333" />
              </svg>
            </div>
            <div class="st-info">文档:24.9M/0 字节</div>
            <div class="st-arrow"><i></i></div>
            <div class="hscroll"><i class="left"></i><i class="right"></i></div>
            <div class="corner-box"></div>
          </div>
        </div>

        <div class="dock">
          <div class="head">${this.chevrons("l")}</div>
          ${dockGroups.map(
            (g) => html`<div class="dock-group" style="height:${g.h}px;padding-top:${g.pad}px">
              <div class="grip-h"></div>
              ${g.icons.map(
                (d) => html`<div class="dock-icon">
                  ${typeof d === "string" ? html`<span>${d}</span>` : ic(d, 20, 20)}
                </div>`,
              )}
            </div>`,
          )}
        </div>

        <div class="panels">
          <div class="head">${this.chevrons("r")}</div>
          ${this.tabs(["颜色", "色板", "样式"], 0)}
          <div class="color-body">
            <div class="color-top">
              <div class="swatches"><i class="b"></i><i class="f"></i></div>
              <div>
                ${["r", "g", "b"].map(
                  (c) => html`<div class="chan">
                    <label>${c.toUpperCase()}</label>
                    <div class="bar ${c}">
                      <svg class="thumb" viewBox="0 0 9 7">
                        <path d="M4.5 .5l4 3.500v2.500H.5V4z" fill="#dff3df" stroke="#2c9a3c" />
                      </svg>
                    </div>
                    <div class="val">255</div>
                  </div>`,
                )}
              </div>
            </div>
            <div class="spectrum">
              <div class="hue"></div>
              <div class="bw"></div>
            </div>
          </div>

          <div class="divider"></div>
          ${this.tabs(["调整", "蒙版"], 1, true)}
          <div class="mask-body">
            <div class="m-top">
              <div class="m-thumb"></div>
              <div class="m-name">未选择蒙版</div>
              <svg class="m-pick" width="15" height="15" viewBox="0 0 15 15">
                <rect x=".5" y=".5" width="14" height="14" fill="#bbb" stroke="#444" />
                <circle cx="7" cy="7" r="4" fill="#eee" stroke="#444" />
                <path d="M11 10v4M9 12h4" stroke="#000" />
              </svg>
              <svg width="15" height="15" viewBox="0 0 15 15">
                <path d="M1 9l7-7 4 3-7 7H2z" fill="#ccc" stroke="#555" stroke-dasharray="2 1" />
                <path d="M12 10v4M10 12h4" stroke="#000" />
              </svg>
            </div>
            <div class="hr"></div>
            <div class="field"><span>浓度:</span><i></i></div>
            <div class="m-slider"></div>
            <div class="field"><span>羽化:</span><i></i></div>
            <div class="m-slider"></div>
            <div class="adjust">
              <span>调整:</span>
              <div class="m-btns">
                <div class="m-btn">蒙版边缘...</div>
                <div class="m-btn">颜色范围...</div>
                <div class="m-btn">反相</div>
              </div>
            </div>
            <div class="hr"></div>
            <div class="m-foot">
              <svg class="f-load" width="14" height="14" viewBox="0 0 14 14">
                <circle cx="7" cy="7" r="4.5" fill="none" stroke="#999" stroke-dasharray="1 1.5" />
              </svg>
              <svg class="f-apply" width="18" height="14" viewBox="0 0 18 14">
                <path d="M1 7l8-6 8 6-8 6z" fill="#cfe6df" stroke="#8aa" />
                <path d="M9 4v5M6 7l3 3 3-3" fill="none" stroke="#38a" />
              </svg>
              <svg class="f-eye" width="16" height="14" viewBox="0 0 16 14">
                <path d="M2 7c3-4 9-4 12 0-3 4-9 4-12 0z" fill="#999" stroke="#555" />
                <circle cx="8" cy="7" r="2" fill="#333" />
                <path d="M2 1l11 12" stroke="#e44" />
              </svg>
              <div class="spacer"></div>
              <svg class="f-trash" width="12" height="13" viewBox="0 0 12 13">
                <path d="M2 3h8l-1 9H3zM1 2h10" fill="#ddd" stroke="#666" />
                <path d="M5 5v5M7 5v5" stroke="#666" />
              </svg>
            </div>
          </div>

          <div class="divider"></div>
          ${this.tabs(["图层", "通道", "路径"], 0, true)}
          <div class="layer-body">
            <div class="l-row">
              <div class="l-select">正常<div class="tri"></div></div>
              <span class="shadowed w-opacity">不透明度:</span>
              <div class="pct">100%</div>
              <div class="pct-btn"><i></i></div>
            </div>
            <div class="l-hr"></div>
            <div class="l-row lock">
              <span class="shadowed w-lock">锁定:</span>
              <svg class="lk-a" width="14" height="14" viewBox="0 0 14 14">
                <rect x=".5" y=".5" width="13" height="13" fill="#eee" stroke="#999" />
                <path d="M1 1h4v4H1zM9 1h4v4H9zM5 5h4v4H5zM1 9h4v4H1zM9 9h4v4H9z" fill="#bbb" />
              </svg>
              <svg class="lk-b" width="15" height="14" viewBox="0 0 15 14">
                <path d="M14 1L7 8" stroke="#888" stroke-width="1.5" />
                <path d="M8 7c-4 0-4 4-7 6 4 1 7 0 8-4z" fill="#666" />
              </svg>
              <svg class="lk-c" width="15" height="14" viewBox="0 0 15 14">
                <path d="M7.5 1v12M1.5 7h12" stroke="#666" />
                <path d="M7.5 0l-2 2h4zM7.5 14l-2-2h4zM1 7l2-2v4zM14 7l-2-2v4z" fill="#666" />
              </svg>
              <svg class="lk-d" width="12" height="13" viewBox="0 0 12 13">
                <path d="M3 6V4a3 3 0 0 1 6 0v2" fill="none" stroke="#777" stroke-width="1.5" />
                <rect x="1.5" y="6" width="9" height="6" fill="#777" />
              </svg>
              <span class="shadowed w-fill">填充:</span>
              <div class="pct">100%</div>
              <div class="pct-btn"><i></i></div>
            </div>
            <div class="l-hr"></div>
            <div class="l-list">
              <div class="l-rows">
                <div class="l-layer">
                  <div class="eye">
                    <div class="eye-in">
                      <svg width="13" height="9" viewBox="0 0 13 9">
                        <path d="M0 4.5C3 0 10 0 13 4.5 10 9 3 9 0 4.5z" fill="#555" />
                        <circle cx="6.5" cy="4.5" r="2.5" fill="#111" />
                      </svg>
                    </div>
                  </div>
                  <div class="l-main">
                    <div class="l-thumb"></div>
                    <div class="l-name">背景</div>
                    <svg class="l-lock" width="11" height="11" viewBox="0 0 11 11">
                      <path d="M3 5V3a2.5 2.5 0 0 1 5 0v2" fill="none" stroke="#111" stroke-width="1.2" />
                      <rect x="1" y="5" width="9" height="6" fill="#111" />
                      <rect x="3" y="7" width="5" height="2" fill="#fff" />
                    </svg>
                  </div>
                </div>
              </div>
              <div class="l-scroll"><i class="up"></i><i class="down"></i></div>
            </div>
            <div class="l-foot">
              <div class="cell">
                <svg width="19" height="10" viewBox="0 0 19 10">
                  <rect x="1" y="2" width="10" height="6" rx="3" fill="none" stroke="#666" stroke-width="1.5" />
                  <rect x="8" y="2" width="10" height="6" rx="3" fill="none" stroke="#666" stroke-width="1.5" />
                </svg>
              </div>
              <div class="cell"><span class="fx">fx</span></div>
              <div class="cell">
                <svg width="14" height="13" viewBox="0 0 14 13">
                  <rect x=".5" y=".5" width="13" height="12" fill="#bbb" stroke="#444" />
                  <circle cx="7" cy="6.5" r="3" fill="#eee" stroke="#555" />
                </svg>
              </div>
              <div class="cell">
                <svg width="17" height="14" viewBox="0 0 17 14">
                  <circle cx="7" cy="7" r="6" fill="#222" />
                  <path d="M11 3a6 6 0 0 1-8 8z" fill="#eee" />
                  <path d="M13 11h4l-2 2z" fill="#000" />
                </svg>
              </div>
              <div class="cell">
                <svg width="15" height="12" viewBox="0 0 15 12">
                  <path d="M1 11V1h5l1 2h7v8z" fill="#eee" stroke="#333" />
                </svg>
              </div>
              <div class="cell">
                <svg width="12" height="13" viewBox="0 0 12 13">
                  <rect x=".5" y=".5" width="11" height="12" fill="#eee" stroke="#333" />
                  <path d="M1 6h5v6H1z" fill="#333" />
                </svg>
              </div>
              <div class="cell">
                <svg width="12" height="13" viewBox="0 0 12 13">
                  <path d="M2 3h8l-1 9H3zM1 2h10" fill="#ddd" stroke="#555" />
                  <path d="M5 5v5M7 5v5" stroke="#555" />
                </svg>
              </div>
            </div>
          </div>
        </div>

        <div class="frame-r"></div>
      </div>

      <div class="mark">
        <svg width="240" height="125" viewBox="0 0 240 125">
          <g fill="rgba(255,255,255,.68)" stroke="rgba(120,120,120,.3)">
            <ellipse cx="90" cy="33" rx="10" ry="12" transform="rotate(-25 90 33)" />
            <ellipse cx="105" cy="20" rx="9" ry="13" />
            <ellipse cx="123" cy="22" rx="9" ry="13" transform="rotate(10 123 22)" />
            <ellipse cx="138" cy="40" rx="8" ry="12" transform="rotate(20 138 40)" />
            <path d="M115 38c10 0 15 10 23 15 8 7 5 26-12 26-8 0-14-3-20-1-12 3-25-3-25-15 0-8 6-12 12-16 8-4 10-9 22-9z" />
          </g>
        </svg>
        <span class="bai">Bai</span>
        <span class="du">du</span>
        <span class="jy">经验</span>
        <span class="url">jingyan.baidu.com</span>
      </div>
    `;
  }
}

declare global {
  interface HTMLElementTagNameMap {
    "app-root": AppRoot;
  }
}
